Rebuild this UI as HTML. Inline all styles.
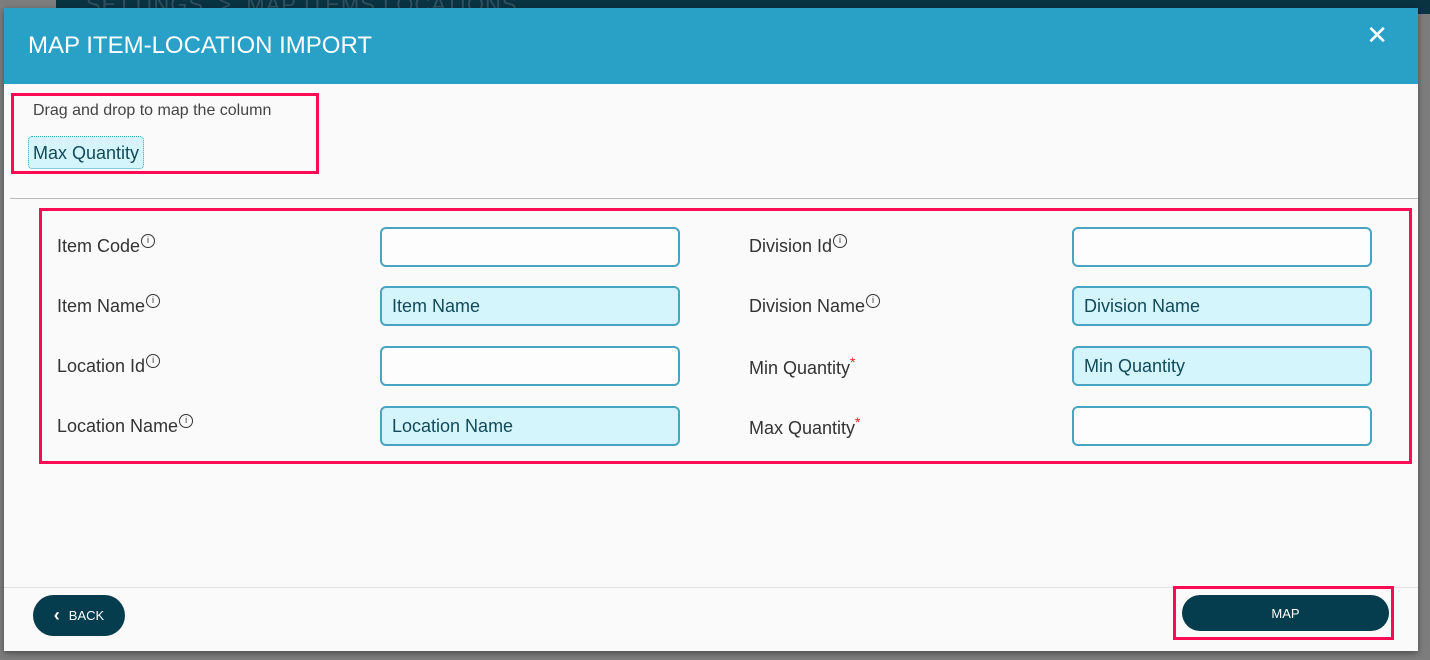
<!DOCTYPE html>
<html><head><style>
*{box-sizing:border-box;margin:0;padding:0}
body{width:1430px;height:660px;overflow:hidden;background:#7d7d7d;font-family:"Liberation Sans",sans-serif;position:relative}
.top{position:absolute;left:56px;top:0;width:1374px;height:14px;background:#0a3342;color:#2f5060;font-size:22px;line-height:10px;padding-left:30px;overflow:hidden;letter-spacing:1px}
.modal{position:absolute;left:4px;top:8px;width:1414px;height:643px;background:#fafafa;box-shadow:0 2px 6px rgba(0,0,0,.4)}
.hdr{height:76px;background:#29a0c6;color:#fff;font-size:24px;padding:24px 0 0 24px}
.x{position:absolute;right:30px;top:12px;color:#fff;font-size:26px}
.red{position:absolute;border:3px solid #ff0a55}
.lbl{position:absolute;font-size:18px;color:#333}
.inp{position:absolute;width:300px;height:40px;border:2px solid #48a4c2;border-radius:6px;background:#fdfdfd;font-size:18px;color:#124a5a;padding:8px 10px}
.f{background:#d4f5fc}
.btn{position:absolute;background:#053d4e;color:#fff;font-size:13px;border-radius:21px;display:flex;align-items:center;justify-content:center}
.i{display:inline-block;width:14px;height:14px;border:1.3px solid #333;border-radius:50%;font-size:9px;line-height:11px;text-align:center;vertical-align:9px;margin-left:1px}
.st{color:#e02020;font-size:14px;vertical-align:7px}
</style></head><body>
<div class="top">SETTINGS &nbsp;&gt;&nbsp; MAP ITEMS  LOCATIONS</div>
<div class="modal">
<div class="hdr">MAP ITEM-LOCATION IMPORT</div>
<div class="x">✕</div>
<div style="position:absolute;left:29px;top:94px;font-size:16px;color:#444">Drag and drop to map the column</div>
<div style="position:absolute;left:24px;top:128px;height:33px;padding:6px 4px;border:1px dotted #3aa5c5;border-radius:4px;background:#d4f5fc;font-size:18px;color:#124a5a">Max Quantity</div>
<div style="position:absolute;left:6px;top:190px;width:1408px;height:1px;background:#bbb"></div>
<div style="position:absolute;left:0;top:579px;width:1414px;height:1px;background:#e2e2e2"></div>
<div class="lbl" style="left:53px;top:226px">Item Code<span class="i">i</span></div>
<div class="lbl" style="left:53px;top:286px">Item Name<span class="i">i</span></div>
<div class="lbl" style="left:53px;top:346px">Location Id<span class="i">i</span></div>
<div class="lbl" style="left:53px;top:406px">Location Name<span class="i">i</span></div>
<div class="lbl" style="left:745px;top:226px">Division Id<span class="i">i</span></div>
<div class="lbl" style="left:745px;top:286px">Division Name<span class="i">i</span></div>
<div class="lbl" style="left:745px;top:346px">Min Quantity<span class="st">*</span></div>
<div class="lbl" style="left:745px;top:406px">Max Quantity<span class="st">*</span></div>
<div class="inp" style="left:376px;top:219px"></div>
<div class="inp f" style="left:376px;top:278px">Item Name</div>
<div class="inp" style="left:376px;top:338px"></div>
<div class="inp f" style="left:376px;top:398px">Location Name</div>
<div class="inp" style="left:1068px;top:219px"></div>
<div class="inp f" style="left:1068px;top:278px">Division Name</div>
<div class="inp f" style="left:1068px;top:338px">Min Quantity</div>
<div class="inp" style="left:1068px;top:398px"></div>
<div class="btn" style="left:29px;top:587px;width:92px;height:41px"><span style="font-size:18px;font-weight:bold;margin-right:9px">‹</span>BACK</div>
<div class="btn" style="left:1178px;top:587px;width:207px;height:36px">MAP</div>
</div>
<div class="red" style="left:11px;top:93px;width:308px;height:81px"></div>
<div class="red" style="left:39px;top:208px;width:1373px;height:256px"></div>
<div class="red" style="left:1173px;top:586px;width:221px;height:54px"></div>
</body></html>
